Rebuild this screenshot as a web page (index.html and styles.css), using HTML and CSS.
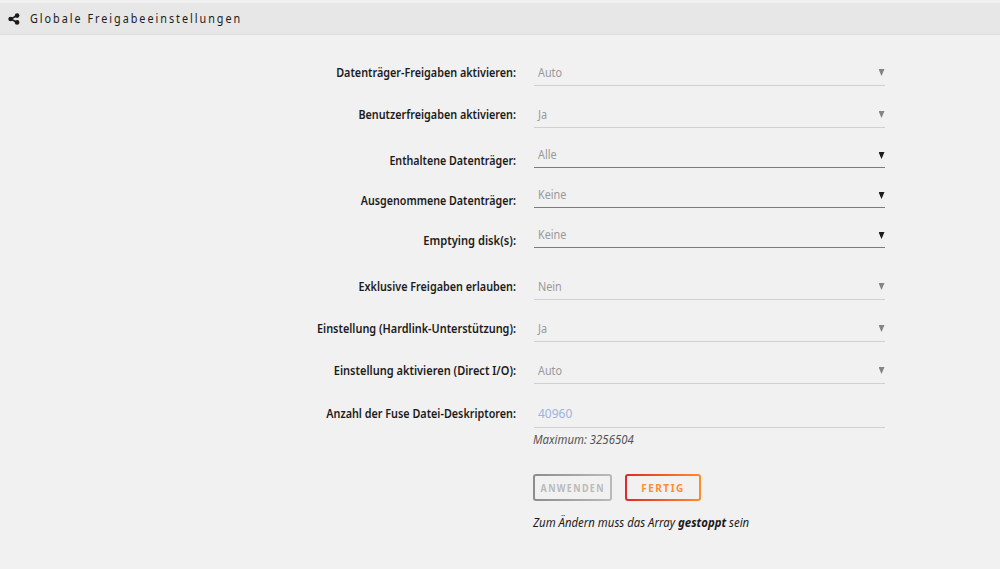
FILE: index.html
```html
<!DOCTYPE html>
<html lang="de">
<head>
<meta charset="utf-8">
<title>Globale Freigabeeinstellungen</title>
<link rel="stylesheet" href="styles.css">
</head>
<body>
<header class="title">
<svg class="share" viewBox="0 0 12 12"><path d="M9 2.5 3 6l6 3.5" fill="none" stroke="currentColor" stroke-width="1.6"/><circle cx="9.1" cy="2.6" r="2.3"/><circle cx="2.6" cy="6" r="2.3"/><circle cx="9.1" cy="9.4" r="2.3"/></svg>
<h1 class="heading">Globale Freigabeeinstellungen</h1>
</header>
<main class="form">
<div class="row"><span class="label">Datenträger-Freigaben aktivieren:</span><div class="field"><span class="value">Auto</span><i class="arrow"></i></div></div>
<div class="row"><span class="label">Benutzerfreigaben aktivieren:</span><div class="field"><span class="value">Ja</span><i class="arrow"></i></div></div>
<div class="row multi"><span class="label snug">Enthaltene Datenträger:</span><div class="field"><span class="value">Alle</span><i class="arrow"></i></div></div>
<div class="row multi"><span class="label snug">Ausgenommene Datenträger:</span><div class="field"><span class="value">Keine</span><i class="arrow"></i></div></div>
<div class="row multi"><span class="label loose">Emptying disk(s):</span><div class="field"><span class="value">Keine</span><i class="arrow"></i></div></div>
<div class="row spaced"><span class="label">Exklusive Freigaben erlauben:</span><div class="field"><span class="value">Nein</span><i class="arrow"></i></div></div>
<div class="row"><span class="label wide">Einstellung (Hardlink-Unterstützung):</span><div class="field"><span class="value">Ja</span><i class="arrow"></i></div></div>
<div class="row"><span class="label wider">Einstellung aktivieren (Direct I/O):</span><div class="field"><span class="value">Auto</span><i class="arrow"></i></div></div>
<div class="row number"><span class="label">Anzahl der Fuse Datei-Deskriptoren:</span><div class="field"><span>40960</span></div></div>
<div class="footer">
<p class="maximum">Maximum: 3256504</p>
<div class="actions"><button class="button apply" disabled><span class="caption">ANWENDEN</span></button><button class="button done">FERTIG</button></div>
<p class="notice">Zum Ändern muss das Array <b>gestoppt</b> sein</p>
</div>
</main>
</body>
</html>
```
FILE: styles.css
```css
* { box-sizing: border-box; }
body { margin: 0; padding-top: 3px; height: 569px; overflow: hidden; background: #f1f1f1; color: #1c1b1b; font-family: "Noto Sans", sans-serif; font-size: 12px; }
.title { display: flex; align-items: center; height: 32px; padding-left: 8px; background: #e7e7e7; border-bottom: 1px solid #dedede; }
.share { width: 12px; height: 12px; fill: currentColor; }
.heading { margin: 0 0 0 10px; font-size: 12px; font-weight: 400; letter-spacing: 2.2px; line-height: 20px; white-space: nowrap; transform: scaleX(.9); transform-origin: left; }
.form { padding-top: 9px; }
.row { display: flex; align-items: flex-end; height: 42px; }
.label { width: 516px; margin-right: 17.5px; padding-bottom: 5px; text-align: right; line-height: 16px; font-weight: 600; white-space: nowrap; transform: scaleX(.9); transform-origin: right; }
.label.snug { transform: scaleX(.89); }
.label.loose { transform: scaleX(.93); }
.label.wide { transform: scaleX(.909); }
.label.wider { transform: scaleX(.919); }
.field { display: flex; justify-content: space-between; align-items: center; width: 351.5px; height: 26px; padding: 0 0 0 4.5px; border-bottom: 1px solid #d0d0d0; color: #999; line-height: 25px; }
.value { transform: scaleX(.9); transform-origin: left; }
.arrow { width: 6px; height: 7px; margin-right: .5px; background: #858585; clip-path: polygon(0 0, 100% 0, 50% 100%); }
.multi { height: 40px; }
.multi .label { padding-bottom: 0; margin-bottom: -1px; }
.multi .field { border-color: #7c7c7c; }
.multi .arrow { background: #1c1b1b; margin-top: 2px; }
.spaced { height: 52px; }
.number { height: 44px; }
.number .label { padding-bottom: 6px; }
.number .field { height: 28px; line-height: 27px; color: #9eb3dc; }
.footer { padding-left: 533px; font-style: italic; }
.maximum, .notice { line-height: 16px; transform: scaleX(.948); transform-origin: left; }
.maximum { margin: 4px 0 0; color: #555; }
.actions { display: flex; gap: 13px; margin-top: 26px; }
.button { height: 27px; padding: 0; border: 0; border-radius: 3px; font: 700 10px "Noto Sans", sans-serif; letter-spacing: 1.5px; }
.caption { display: inline-block; transform: scaleX(.9); }
.apply { width: 79px; color: #bababa; background: linear-gradient(#f1f1f1, #f1f1f1) padding-box, linear-gradient(90deg, #8d8d8d, #bababa) border-box; border: 2px solid transparent; }
.done { width: 76px; color: #ff8c2f; background: linear-gradient(#f1f1f1, #f1f1f1) padding-box, linear-gradient(90deg, #e22828, #ff8c2f) border-box; border: 2px solid transparent; }
.notice { margin: 14px 0 0; }
```
